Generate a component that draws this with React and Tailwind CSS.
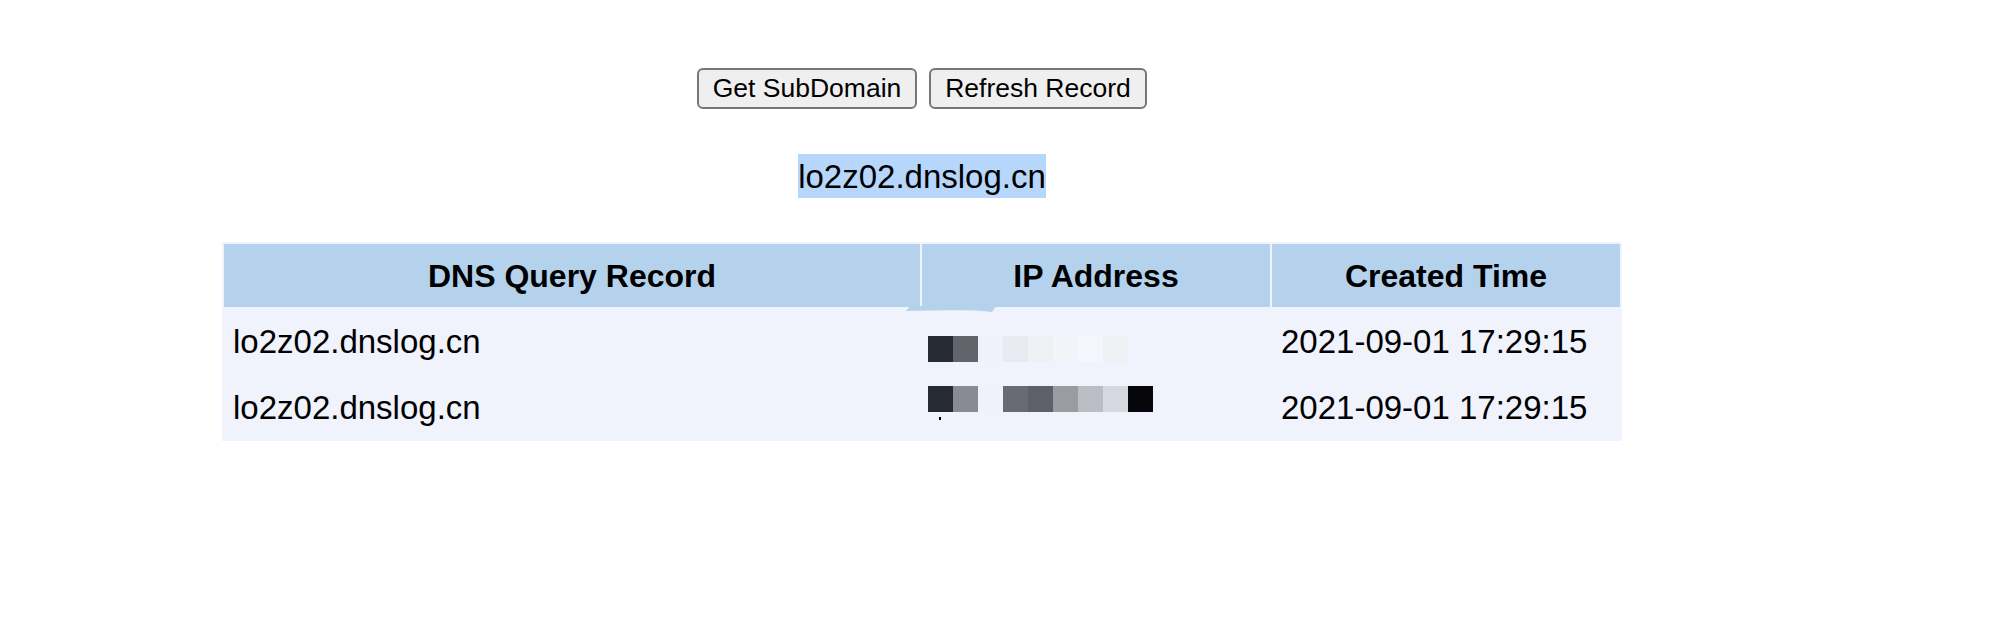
import React from 'react';

const records = [
  {
    domain: 'lo2z02.dnslog.cn',
    blocks: ['#262a33', '#62646c', '#f0f2fb', '#e9e9f1', '#eef0f4', '#f2f4f9', '#f4f6fe', '#eff1f5'],
    time: '2021-09-01 17:29:15',
  },
  {
    domain: 'lo2z02.dnslog.cn',
    blocks: ['#262a33', '#898a92', '#f0f2fb', '#6a6a73', '#5e6069', '#9a9ca1', '#babdc4', '#d6d8df', '#05050a'],
    time: '2021-09-01 17:29:15',
  },
];

// pixelated (masked) ip address
const Mosaic = ({ blocks, dot }) => (
  <div className="relative flex h-[26px]">
    {blocks.map((c, i) => (
      <div key={i} className="w-[25px] h-[26px]" style={{ backgroundColor: c }} />
    ))}
    {dot && <div className="absolute left-[11px] top-[31px] w-[2px] h-[3px] bg-black" />}
  </div>
);

const App = () => {
  return (
    <div className="w-[2004px] h-[636px] bg-white font-['Liberation_Sans',Arial,sans-serif] text-black">
      <div className="w-[1844px] flex flex-col items-center pt-[68px]">
        {/* Buttons */}
        <div className="flex gap-[12px]">
          <button className="w-[220px] h-[41px] bg-[#efefef] border-2 border-[#767676] rounded-[6px] text-[26.5px] leading-none">
            Get SubDomain
          </button>
          <button className="w-[218px] h-[41px] bg-[#efefef] border-2 border-[#767676] rounded-[6px] text-[26.5px] leading-none">
            Refresh Record
          </button>
        </div>

        {/* Subdomain */}
        <div className="mt-[45px] h-[44px] flex items-center bg-[#b7d6fb] text-[33px] leading-none">
          lo2z02.dnslog.cn
        </div>

        {/* Records */}
        <table className="mt-[44px] w-[1400px] border-separate border-spacing-[2px] bg-[#f0f2fc]">
          <thead>
            <tr className="bg-[#b4d2ec]">
              <th className="relative w-[696px] h-[63px] p-0 text-[32px] font-bold text-center">
                DNS Query Record
                <svg className="absolute right-[-76px] bottom-[-5px] z-10" width="90" height="6" viewBox="0 0 90 6">
                  <path d="M4 0 H90 L86 6 C60 3 30 5 0 5 Z" fill="#b4d2ec" />
                </svg>
              </th>
              <th className="w-[348px] h-[63px] p-0 text-[32px] font-bold text-center">IP Address</th>
              <th className="w-[348px] h-[63px] p-0 text-[32px] font-bold text-center">Created Time</th>
            </tr>
          </thead>
          <tbody>
            {records.map((r, i) => (
              <tr key={i}>
                <td className="h-[64px] p-0 pl-[9px] text-[33px] leading-none">{r.domain}</td>
                <td className={i === 0 ? 'h-[64px] p-0 pl-[6px] pt-[16px]' : 'h-[64px] p-0 pl-[6px] pb-[16px]'}>
                  <Mosaic blocks={r.blocks} dot={i === 1} />
                </td>
                <td className="h-[64px] p-0 pl-[9px] text-[33px] leading-none">{r.time}</td>
              </tr>
            ))}
          </tbody>
        </table>
      </div>
    </div>
  );
};

export default App;
